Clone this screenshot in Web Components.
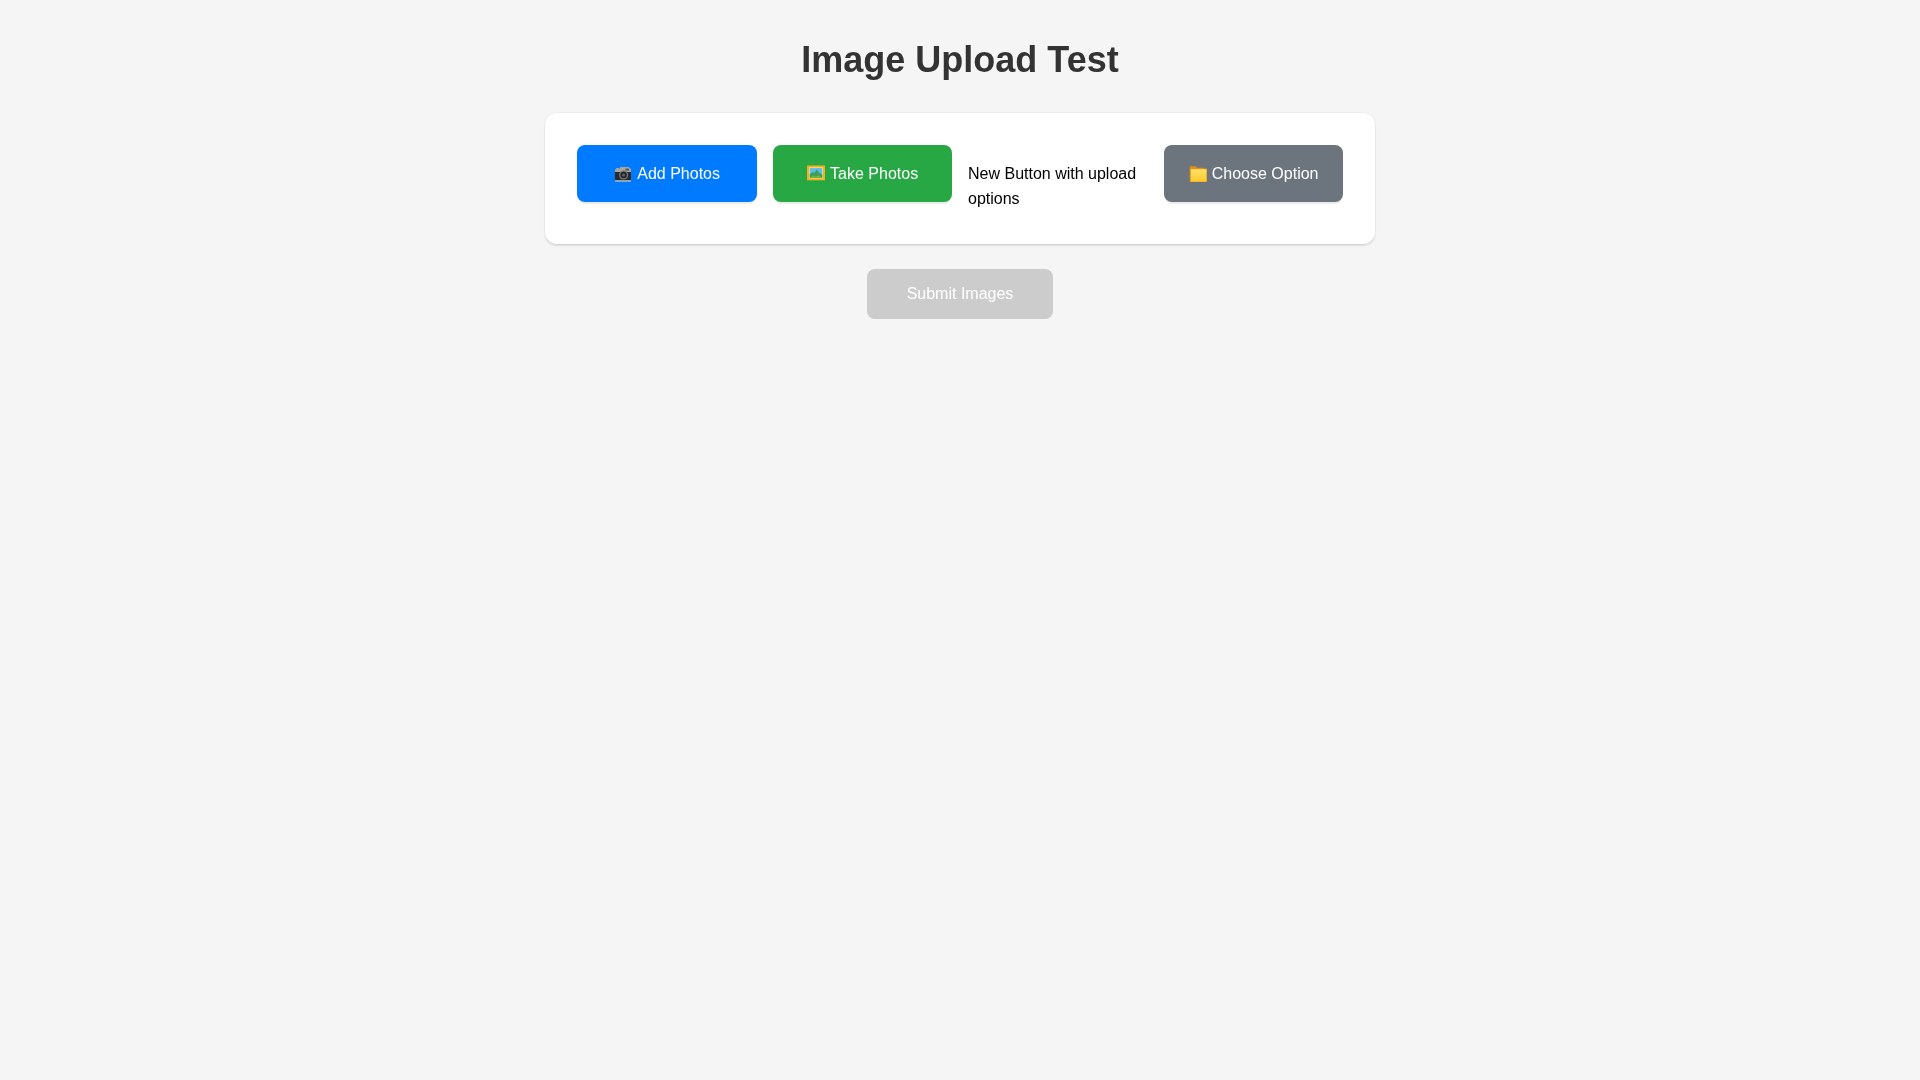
<!DOCTYPE html>
<html lang="en">
<head>
<meta charset="utf-8">
<title>Image Upload Test</title>
<style>
  html, body { margin: 0; padding: 0; }
  body {
    background: #f5f5f5;
    font-family: "Liberation Sans", Arial, sans-serif;
    font-size: 16px;
    line-height: 1.6;
    color: #000;
  }
</style>
</head>
<body>
<upload-page heading="Image Upload Test">
  <upload-card>
    <upload-button color="#007bff" icon="camera">Add Photos</upload-button>
    <upload-button color="#28a745" icon="picture">Take Photos</upload-button>
    <upload-note>New Button with upload options</upload-note>
    <upload-button color="#6c757d" icon="folder">Choose Option</upload-button>
  </upload-card>
  <submit-button disabled>Submit Images</submit-button>
</upload-page>

<script>
const icons = {
    camera: `<path d="M1 5.2h1.2V4h2.6v1.2H5L6.2 3h8.6l1.2 1.4h1v12.6H1z" fill="#a9a59d"/>
        <rect x="1" y="8" width="16" height="8.6" fill="#2b2b2d"/>
        <rect x="1" y="16.4" width="16" height="1.2" fill="#c9c9cc"/>
        <rect x="11.5" y="4.6" width="3.4" height="2" fill="#56565a"/>
        <circle cx="9.6" cy="11" r="4.6" fill="#77777b"/>
        <circle cx="9.6" cy="11" r="3.2" fill="#242426"/>
        <circle cx="9.6" cy="11" r="1.6" fill="#5b5f66"/>`,
    picture: `<rect x="0" y="1.5" width="18" height="14.8" fill="#f6b119"/>
        <rect x="2" y="3.4" width="14" height="11" fill="#fde9a8"/>
        <rect x="2.7" y="4.1" width="12.6" height="9.6" fill="#5cbcec"/>
        <path d="M2.7 13.7v-3.4l2.8-2.2 1.6 1L9.6 5.4l3 3.6 2.7 1.4v3.3z" fill="#3f9f5a"/>
        <path d="M2.7 13.7l3.3-2.3 3 .8 2.6-1 3.7 2.5z" fill="#6fb548"/>`,
    folder: `<path d="M.6 3.4q0-1.2 1.2-1.2h4.6l1.4 1.6h6.8v3H.6z" fill="#e88c12"/>
        <path d="M.6 5.2h1v12.4h-1z" fill="#c9800f"/>
        <rect x="1" y="4.6" width="17" height="13.6" rx=".6" fill="#dc9a1c"/>
        <rect x="1.8" y="5.2" width="15.6" height="12.4" fill="url(#folderFill)"/>
        <defs><linearGradient id="folderFill" x1="0" y1="0" x2="0" y2="1">
            <stop offset="0" stop-color="#ffe16a"/><stop offset="1" stop-color="#fdc92f"/>
        </linearGradient></defs>`
};

customElements.define('upload-page', class extends HTMLElement {
    constructor() {
        super();
        this.attachShadow({mode: 'open'});
        this.shadowRoot.innerHTML = `<style>
            :host { display: flex; flex-direction: column; align-items: center; padding-top: 31px; will-change: transform; }
            h1 { margin: 0 0 24px; font-size: 36px; line-height: 57.6px; font-weight: 700; color: #333; text-align: center; }
        </style><h1></h1><slot></slot>`;
    }

    connectedCallback() {
        this.shadowRoot.querySelector('h1').textContent = this.getAttribute('heading');
    }
});

customElements.define('upload-card', class extends HTMLElement {
    constructor() {
        super();
        this.attachShadow({mode: 'open'});
        this.shadowRoot.innerHTML = `<style>
            :host {
                display: grid; grid-template-columns: repeat(4, minmax(0, 1fr)); align-items: start; gap: 16px;
                box-sizing: border-box; width: 830px; padding: 32px;
                background: #fff; border-radius: 12px;
                box-shadow: 0 0 0 1px rgba(0, 0, 0, .03), 0 2px 2px rgba(0, 0, 0, .1);
            }
        </style><slot></slot>`;
    }
});

customElements.define('upload-button', class extends HTMLElement {
    constructor() {
        super();
        this.attachShadow({mode: 'open'});
        this.shadowRoot.innerHTML = `<style>
            :host {
                display: block; padding: 16px 8px 16px 8.6px; border-radius: 8px; text-align: center; color: #fff;
                box-shadow: 0 2px 1px rgba(0, 0, 0, .08);
            }
            svg { width: 18px; height: 18px; vertical-align: -3.5px; margin-right: 5.2px; }
        </style><svg viewBox="0 0 18 18"></svg><slot></slot>`;
    }

    connectedCallback() {
        this.style.background = this.getAttribute('color');
        this.shadowRoot.querySelector('svg').innerHTML = icons[this.getAttribute('icon')];
    }
});

customElements.define('upload-note', class extends HTMLElement {
    constructor() {
        super();
        this.attachShadow({mode: 'open'});
        this.shadowRoot.innerHTML = `<style>
            :host { display: block; padding-top: 16px; }
        </style><slot></slot>`;
    }
});

customElements.define('submit-button', class extends HTMLElement {
    constructor() {
        super();
        this.attachShadow({mode: 'open'});
        this.shadowRoot.innerHTML = `<style>
            :host {
                display: block; margin-top: 25.4px; padding: 12px 40px;
                background: #ccc; color: #fff; border-radius: 8px;
            }
        </style><slot></slot>`;
    }
});
</script>
</body>
</html>
